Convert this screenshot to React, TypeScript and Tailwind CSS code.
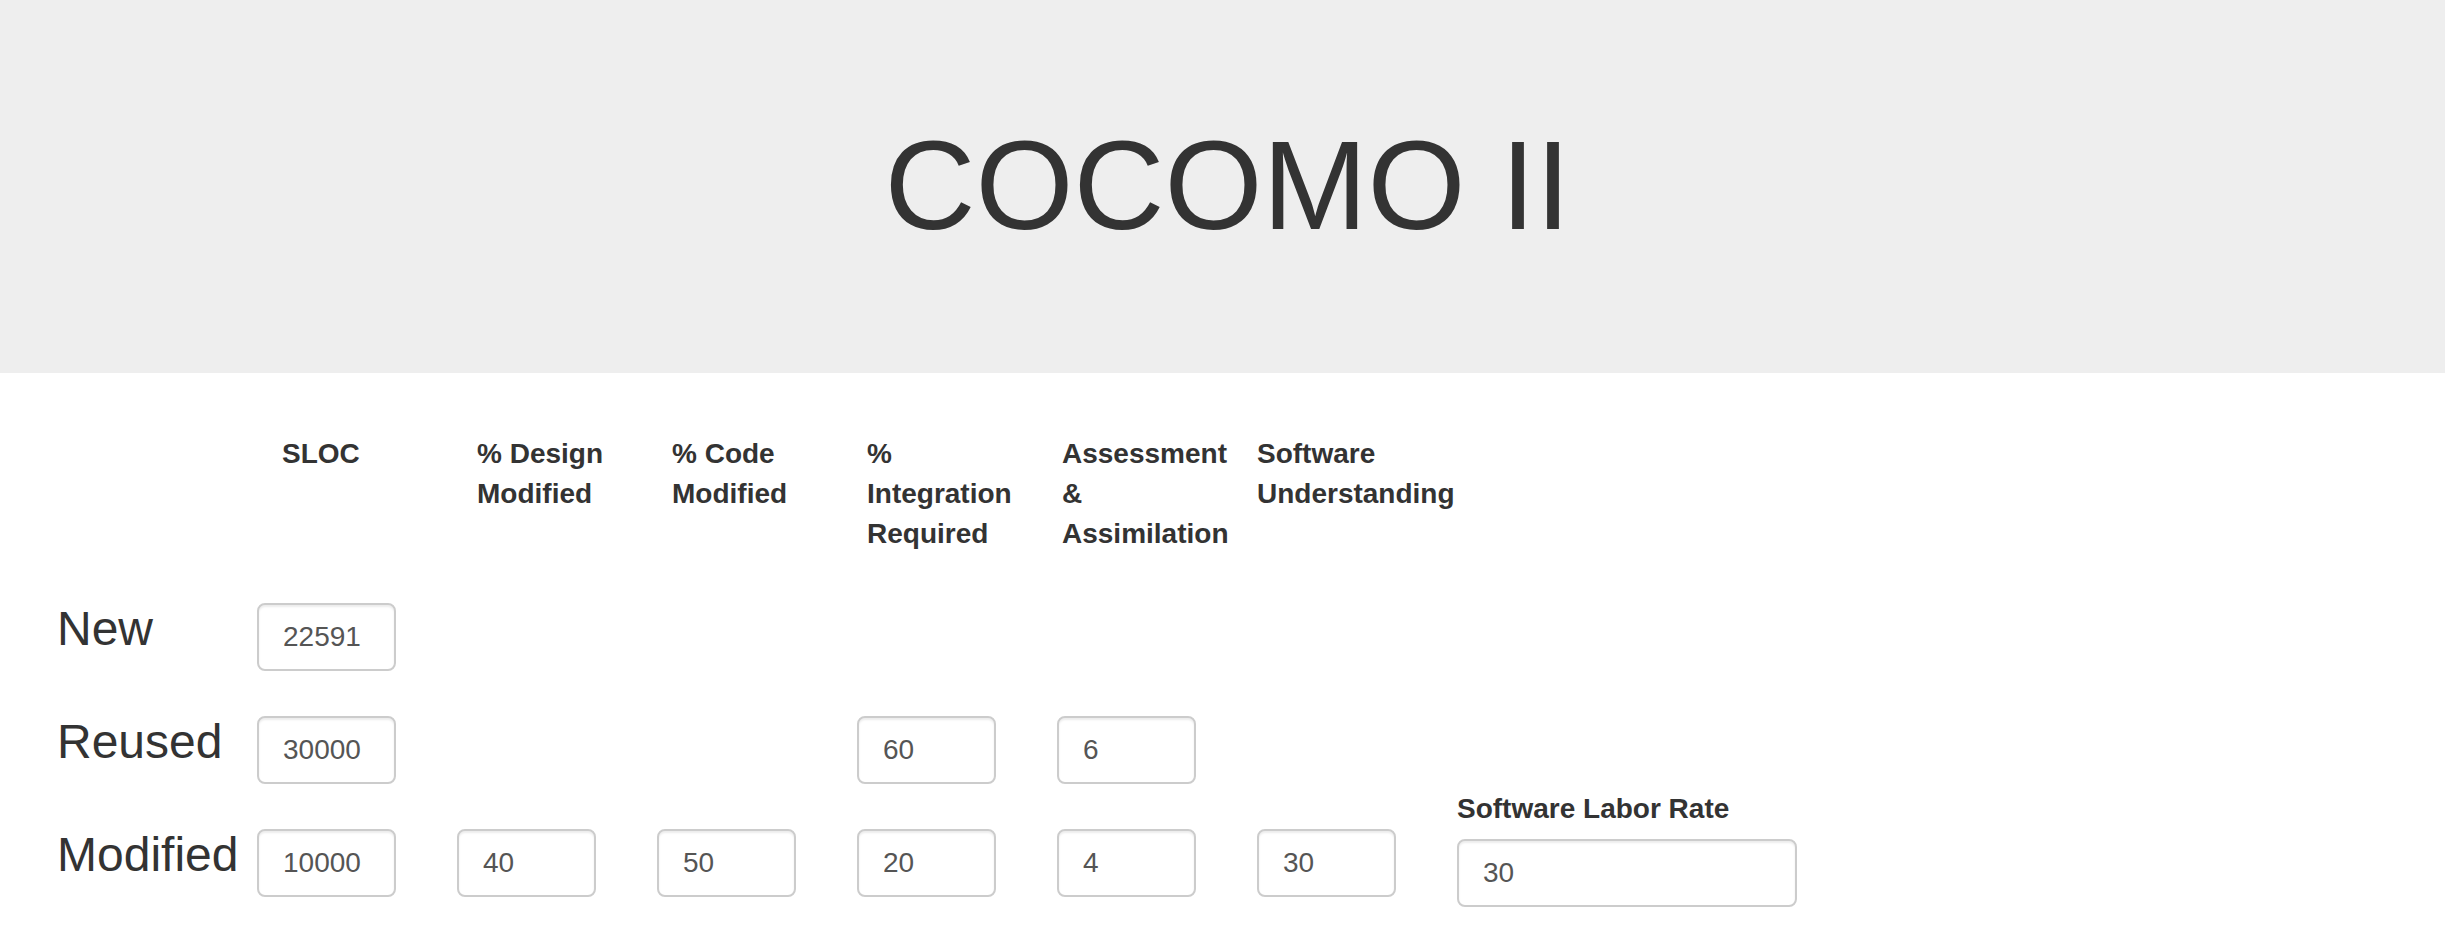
import React from 'react';

const font = { fontFamily: '"Liberation Sans", Arial, Helvetica, sans-serif' };

const headers = ['SLOC', '% Design Modified', '% Code Modified', '% Integration Required', 'Assessment & Assimilation', 'Software Understanding'];

type Row = { name: string; values: (string | null)[] };

const rows: Row[] = [
  { name: 'New', values: ['22591', null, null, null, null, null] },
  { name: 'Reused', values: ['30000', null, null, '60', '6', null] },
  { name: 'Modified', values: ['10000', '40', '50', '20', '4', '30'] },
];

const inputCls =
  'h-[68px] border-2 border-[#ccc] rounded-[8px] px-[24px] text-[28px] leading-[40px] text-[#555] bg-white shadow-[inset_0_2px_2px_rgba(0,0,0,0.075)] outline-none';

const Field: React.FC<{ value: string; wide?: boolean }> = ({ value, wide }) => (
  <input type="text" defaultValue={value} className={`${inputCls} ${wide ? 'w-[340px]' : 'w-[139px]'}`} />
);

export default function App() {
  return (
    <div className="min-h-screen w-full bg-white text-[#333]" style={font}>
      {/* jumbotron */}
      <div className="h-[373px] bg-[#eeeeee] pt-[117px] pl-[10px]">
        <h1 className="text-center text-[126px] leading-[1.1] font-normal text-[#333]">COCOMO II</h1>
      </div>

      <div className="pl-[57px] pt-[61px]">
        {/* column headings */}
        <div className="flex pl-[225px]">
          {headers.map((h) => (
            <div key={h} className="w-[195px] pr-[25px] text-[28px] leading-[40px] font-bold">
              {h}
            </div>
          ))}
        </div>

        {/* input rows */}
        <div className="mt-[49px] flex flex-col gap-[45px]">
          {rows.map((r) => (
            <div key={r.name} className="flex items-start">
              <div className="w-[200px] pt-[2px] text-[48px] leading-[48px]">{r.name}</div>
              {r.values.map((v, i) => (
                <div key={i} className="w-[200px] h-[68px]">
                  {v !== null && <Field value={v} />}
                </div>
              ))}
              {r.name === 'Modified' && (
                <div className="-mt-[40px] flex flex-col">
                  <label className="text-[28px] leading-[40px] font-bold mb-[10px]">Software Labor Rate</label>
                  <Field value="30" wide />
                </div>
              )}
            </div>
          ))}
        </div>
      </div>
    </div>
  );
}
